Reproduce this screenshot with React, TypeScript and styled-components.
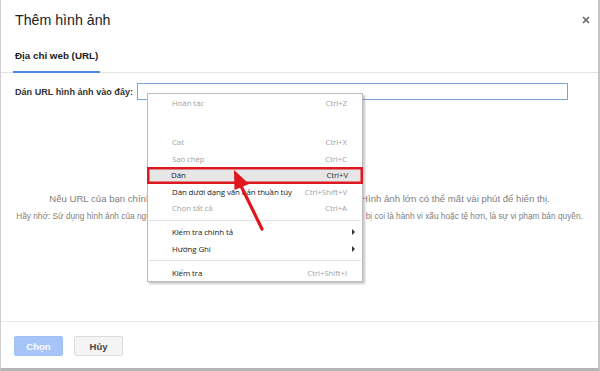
import React from "react";
import styled, { createGlobalStyle } from "styled-components";

const GlobalStyle = createGlobalStyle`
  html, body {
    margin: 0;
    padding: 0;
    background: #fff;
  }
  body {
    font-family: "Liberation Sans", Arial, sans-serif;
  }
`;

const Dialog = styled.div`
  position: relative;
  box-sizing: border-box;
  width: 600px;
  height: 371px;
  display: flex;
  flex-direction: column;
  background: #fff;
  border-left: 1px solid #cfcfcf;
  border-right: 2px solid #c4c4c4;
  border-bottom: 3px solid #b5b5b5;
  overflow: hidden;
`;

const Header = styled.div`
  height: 38px;
  display: flex;
  align-items: center;
  justify-content: space-between;
  padding: 1px 6px 0 14px;
`;

const Title = styled.h1`
  margin: 0;
  font-size: 14.2px;
  font-weight: normal;
  color: #222;
`;

const CloseButton = styled.button`
  border: 0;
  background: none;
  padding: 0;
  width: 12px;
  height: 12px;
  display: flex;
  align-items: center;
  justify-content: center;
`;

const TabBar = styled.div`
  height: 34px;
  box-sizing: border-box;
  display: flex;
  border-bottom: 1px solid #e2e2e2;
  padding-left: 12px;
`;

const Tab = styled.div<{ $active?: boolean }>`
  display: flex;
  align-items: center;
  padding: 1px 2px 0 2px;
  font-size: 9.8px;
  font-weight: bold;
  color: #222;
  margin-bottom: -1px;
  border-bottom: 2px solid ${(p) => (p.$active ? "#4d8ae6" : "transparent")};
`;

const Body = styled.div`
  flex: 1;
  display: flex;
  flex-direction: column;
  padding: 10px 30px 0 14px;
`;

const UrlRow = styled.div`
  display: flex;
  align-items: center;
  gap: 4px;
`;

const Label = styled.label`
  font-size: 9.1px;
  font-weight: bold;
  color: #333;
  white-space: nowrap;
`;

const UrlInput = styled.input`
  flex: 1;
  box-sizing: border-box;
  height: 17px;
  border: 1px solid #7ea3dc;
  outline: none;
  padding: 0 4px;
`;

const Hints = styled.div`
  margin-top: 93px;
  margin-right: -16px;
  display: flex;
  flex-direction: column;
  align-items: center;
  gap: 7px;
  color: #808080;
`;

const HintMain = styled.p`
  margin: 0;
  font-size: 9.6px;
  white-space: nowrap;
`;

const HintSmall = styled.p`
  margin: 0;
  font-size: 8.3px;
  white-space: nowrap;
`;

const Footer = styled.div`
  box-sizing: border-box;
  height: 47px;
  border-top: 1px solid #ebebeb;
  display: flex;
  align-items: flex-start;
  gap: 11px;
  padding: 14px 0 0 13px;
`;

const FooterButton = styled.button<{ $primary?: boolean }>`
  box-sizing: border-box;
  width: 49px;
  height: 20px;
  border-radius: 2px;
  font-family: "Liberation Sans", Arial, sans-serif;
  font-size: 9.5px;
  font-weight: bold;
  color: ${(p) => (p.$primary ? "#fff" : "#444")};
  background: ${(p) => (p.$primary ? "#a6c4f7" : "#f4f4f4")};
  border: 1px solid ${(p) => (p.$primary ? "#a0bff3" : "#dcdcdc")};
  padding: 0;
`;

const Menu = styled.div`
  position: absolute;
  left: 146px;
  top: 93px;
  width: 216px;
  box-sizing: border-box;
  background: #fff;
  border: 1px solid #bcbcbc;
  box-shadow: 2px 2px 2px rgba(0, 0, 0, 0.22);
  padding: 1px 0 0 0;
  font-family: "Open Sans", "Noto Sans", sans-serif;
  font-size: 7.9px;
  letter-spacing: -0.1px;
`;

const MenuItem = styled.div<{ $disabled?: boolean; $marked?: boolean }>`
  height: 16.5px;
  display: flex;
  align-items: center;
  justify-content: space-between;
  white-space: nowrap;
  padding: 0 15px 0 24px;
  color: ${(p) => (p.$disabled ? "#a3a3a3" : "#222")};
  background: ${(p) => (p.$marked ? "#e6e6e6" : "transparent")};
  box-shadow: ${(p) => (p.$marked ? "inset 0 0 0 2.5px #dc1820" : "none")};
  margin: ${(p) => (p.$marked ? "0 -1px" : "0")};
  position: relative;
`;

const Shortcut = styled.span<{ $dim?: boolean }>`
  color: ${(p) => (p.$dim ? "#a3a3a3" : "#333")};
`;

const SubArrow = styled.span`
  width: 0;
  height: 0;
  border-top: 3px solid transparent;
  border-bottom: 3px solid transparent;
  border-left: 3px solid #333;
  margin-right: -8px;
`;

const MenuGap = styled.div`
  height: 22.5px;
`;

const Separator = styled.div`
  height: 1px;
  margin: 3px 1px 3.5px 1px;
  background: #e3e3e3;
`;

const ArrowLayer = styled.svg`
  position: absolute;
  left: 0;
  top: 0;
  pointer-events: none;
`;

type Item = {
  label: string;
  shortcut?: string;
  disabled?: boolean;
  dimShortcut?: boolean;
  marked?: boolean;
  submenu?: boolean;
};

const group1: Item[] = [
  { label: "Cat", shortcut: "Ctrl+X", disabled: true, dimShortcut: true },
  { label: "Sao chép", shortcut: "Ctrl+C", disabled: true, dimShortcut: true },
  { label: "Dán", shortcut: "Ctrl+V", marked: true },
  { label: "Dán dưới dạng văn bản thuần túy", shortcut: "Ctrl+Shift+V", dimShortcut: true },
  { label: "Chọn tất cả", shortcut: "Ctrl+A", disabled: true, dimShortcut: true },
];

const group2: Item[] = [
  { label: "Kiểm tra chính tả", submenu: true },
  { label: "Hướng Ghi", submenu: true },
];

const renderItem = (item: Item) => (
  <MenuItem key={item.label} $disabled={item.disabled} $marked={item.marked}>
    <span>{item.label}</span>
    {item.shortcut && <Shortcut $dim={item.dimShortcut}>{item.shortcut}</Shortcut>}
    {item.submenu && <SubArrow />}
  </MenuItem>
);

export default function App() {
  return (
    <>
      <GlobalStyle />
      <Dialog>
        <Header>
          <Title>Thêm hình ảnh</Title>
          <CloseButton aria-label="Đóng">
            <svg width="8" height="8" viewBox="0 0 8 8">
              <path d="M1 1L7 7M7 1L1 7" stroke="#666" strokeWidth="1.6" />
            </svg>
          </CloseButton>
        </Header>
        <TabBar>
          <Tab $active>Địa chỉ web (URL)</Tab>
        </TabBar>
        <Body>
          <UrlRow>
            <Label>Dán URL hình ảnh vào đây:</Label>
            <UrlInput />
          </UrlRow>
          <Hints>
            <HintMain>
              Nếu URL của bạn chính xác, bạn sẽ thấy bản xem trước hình ảnh ở đây. Hình ảnh lớn có thể mất vài phút để hiển thị.
            </HintMain>
            <HintSmall>
              Hãy nhớ: Sử dụng hình ảnh của người khác trên web mà không có sự cho phép của họ có thể bị coi là hành vi xấu hoặc tệ hơn, là sự vi phạm bản quyền.
            </HintSmall>
          </Hints>
        </Body>
        <Footer>
          <FooterButton $primary>Chọn</FooterButton>
          <FooterButton>Hủy</FooterButton>
        </Footer>

        <Menu>
          {renderItem({ label: "Hoàn tác", shortcut: "Ctrl+Z", disabled: true, dimShortcut: true })}
          <MenuGap />
          {group1.map(renderItem)}
          <Separator />
          {group2.map(renderItem)}
          <Separator />
          {renderItem({ label: "Kiểm tra", shortcut: "Ctrl+Shift+I", dimShortcut: true })}
        </Menu>

        <ArrowLayer width="600" height="371" viewBox="0 0 600 371">
          <line x1="261" y1="229" x2="240" y2="186" stroke="#e0161c" strokeWidth="3.2" strokeLinecap="round" />
          <polygon points="233,170 248,184 233.5,190" fill="#e0161c" />
        </ArrowLayer>
      </Dialog>
    </>
  );
}
